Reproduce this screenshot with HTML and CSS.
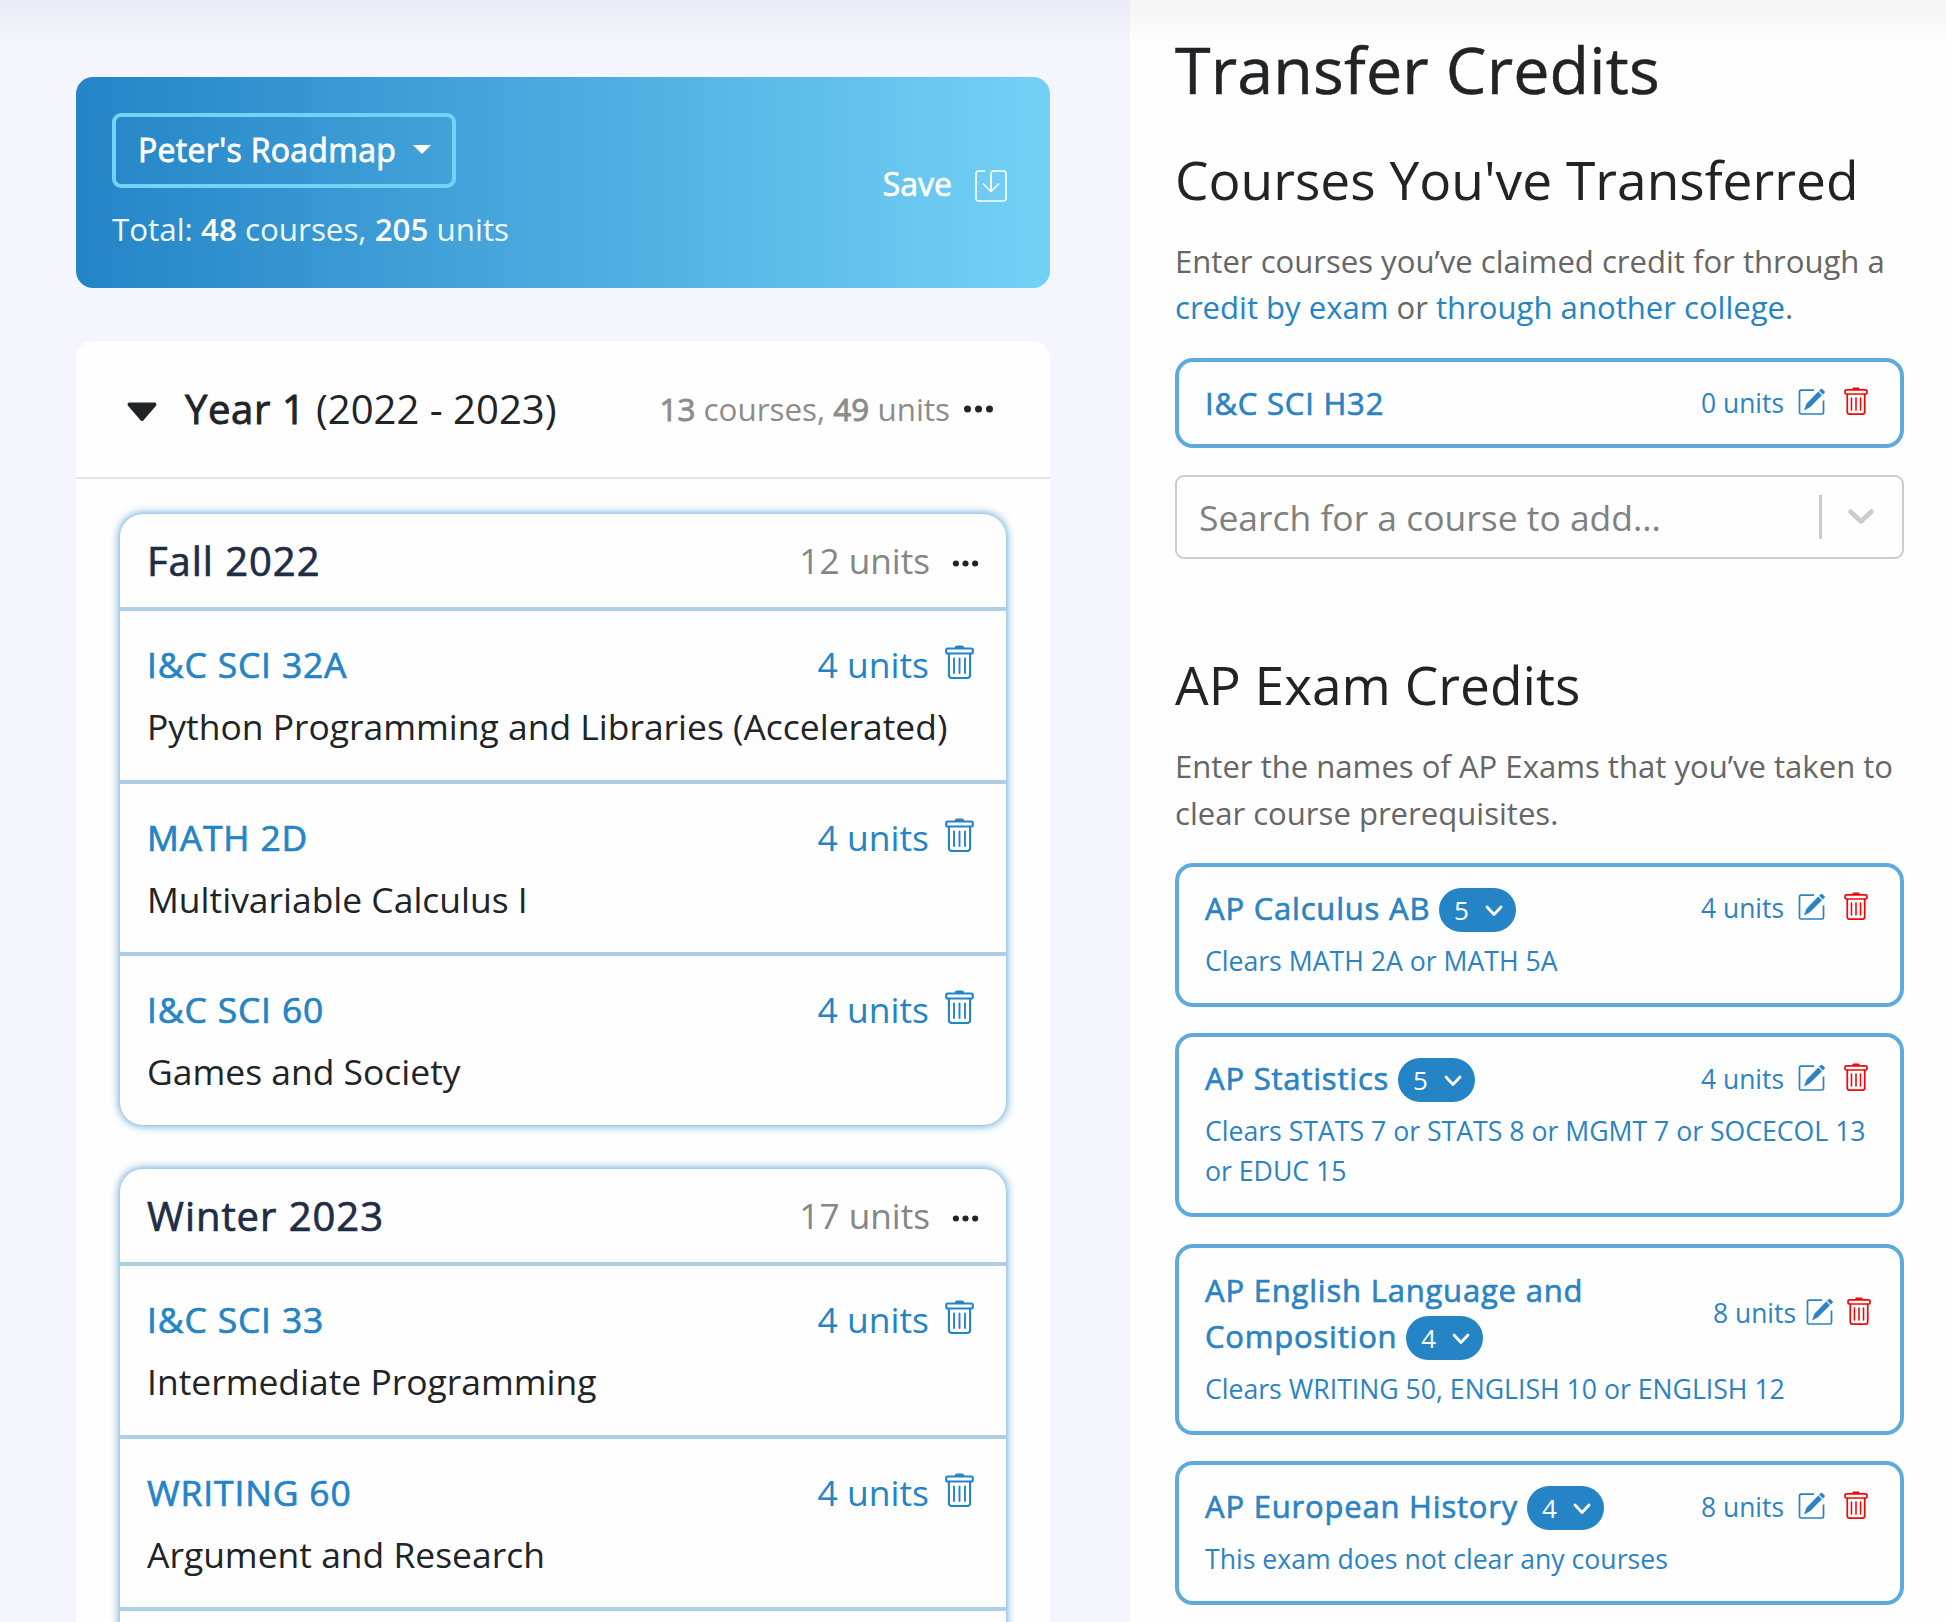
FILE: index.html
```
<!DOCTYPE html>
<html lang="en">
<head>
<meta charset="utf-8">
<title>Peter's Roadmap</title>
<link rel="stylesheet" href="styles.css">
</head>
<body>
<svg class="sprite" width="0" height="0">
  <symbol id="trash" viewBox="0 0 29 34">
    <path d="M9.600 3.400C9.800 1.200 11 .6 12 .6h5c1 0 2.200.6 2.400 2.800z" fill="currentColor"/>
    <g fill="none" stroke="currentColor" stroke-width="2.100" stroke-linecap="round">
      <rect x="1.200" y="3.500" width="26.600" height="5" rx="1.500"/>
      <path d="M3.900 8.800V30a3 3 0 0 0 3 3h15.200a3 3 0 0 0 3-3V8.800"/>
      <path d="M9 13.500v14.500M14.500 13.500v14.500M20 13.500v14.500" stroke-width="1.900"/>
    </g>
  </symbol>
  <symbol id="edit" viewBox="0 0 28 28">
    <path d="M16 2.200H3a1.500 1.500 0 0 0-1.500 1.500V24.500A1.500 1.500 0 0 0 3 26H24a1.500 1.500 0 0 0 1.500-1.500V12.500" fill="none" stroke="currentColor" stroke-width="1.700"/>
    <path d="M20.200 3.800l3.500 3.500L11.600 19.300 6.400 22l2.300-6.300zM21.300 2.700l1.400-1.300a1.200 1.200 0 0 1 1.700 0l1.800 1.800a1.200 1.200 0 0 1 0 1.700l-1.400 1.300z" fill="currentColor" stroke="currentColor" stroke-width=".5"/>
  </symbol>
  <symbol id="dots" viewBox="0 0 30 8">
    <circle cx="4" cy="4" r="3.500" fill="currentColor"/><circle cx="15" cy="4" r="3.500" fill="currentColor"/><circle cx="26" cy="4" r="3.500" fill="currentColor"/>
  </symbol>
  <symbol id="chev" viewBox="0 0 18 12">
    <path d="M2 2l7 7.500L16 2" fill="none" stroke="currentColor" stroke-width="2.800" stroke-linecap="round" stroke-linejoin="round"/>
  </symbol>
</svg>
<div class="app">
  <main class="planner">
    <header class="roadmap">
      <div>
        <button class="picker">Peter's Roadmap<span class="caret"></span></button>
        <div class="total">Total: <b>48</b> courses, <b>205</b> units</div>
      </div>
      <button class="save">Save
        <svg width="32" height="32" viewBox="0 0 32 32" fill="none" stroke="currentColor" stroke-width="1.700" stroke-linecap="round" stroke-linejoin="round"><path d="M9.500 1H3.500A2.500 2.500 0 0 0 1 3.500v25A2.500 2.500 0 0 0 3.500 31h25a2.500 2.500 0 0 0 2.500-2.500v-25A2.500 2.500 0 0 0 28.500 1h-10A2.500 2.500 0 0 0 16 3.500V21M8.500 14l7.500 7.500 7.500-7.500"/></svg>
      </button>
    </header>
    <section class="year">
      <div class="year-head">
        <svg class="fold" width="30" height="20" viewBox="0 0 30 20"><path d="M2.500 0.500h25a2 2 0 0 1 1.500 3.300L16.500 18.200a2 2 0 0 1-3 0L1 3.800A2 2 0 0 1 2.500.5z" fill="currentColor"/></svg>
        <h2 class="year-title"><b>Year 1</b> (2022 - 2023)</h2>
        <span class="year-stats"><b>13</b> courses, <b>49</b> units</span>
        <svg class="year-dots"><use href="#dots"/></svg>
      </div>
      <div class="quarters">
        <section class="quarter">
          <div class="q-head"><h3>Fall 2022</h3><span class="q-units">12 units</span><svg class="q-dots"><use href="#dots"/></svg></div>
          <div class="course"><div class="c-top"><span class="code">I&amp;C SCI 32A</span><span>4 units</span><svg class="trash"><use href="#trash"/></svg></div><div class="c-name">Python Programming and Libraries (Accelerated)</div></div>
          <div class="course"><div class="c-top"><span class="code">MATH 2D</span><span>4 units</span><svg class="trash"><use href="#trash"/></svg></div><div class="c-name">Multivariable Calculus I</div></div>
          <div class="course"><div class="c-top"><span class="code">I&amp;C SCI 60</span><span>4 units</span><svg class="trash"><use href="#trash"/></svg></div><div class="c-name">Games and Society</div></div>
        </section>
        <section class="quarter">
          <div class="q-head"><h3>Winter 2023</h3><span class="q-units">17 units</span><svg class="q-dots"><use href="#dots"/></svg></div>
          <div class="course"><div class="c-top"><span class="code">I&amp;C SCI 33</span><span>4 units</span><svg class="trash"><use href="#trash"/></svg></div><div class="c-name">Intermediate Programming</div></div>
          <div class="course"><div class="c-top"><span class="code">WRITING 60</span><span>4 units</span><svg class="trash"><use href="#trash"/></svg></div><div class="c-name">Argument and Research</div></div>
          <div class="course"></div>
        </section>
      </div>
    </section>
  </main>
  <aside class="transfer">
    <h1>Transfer Credits</h1>
    <h2 class="sec">Courses You've Transferred</h2>
    <p>Enter courses you’ve claimed credit for through a<br><a>credit by exam</a> or <a>through another college</a>.</p>
    <div class="card single">
      <div class="card-row"><div class="name">I&amp;C SCI H32</div><span class="units">0 units</span><svg class="edit"><use href="#edit"/></svg><svg class="del"><use href="#trash"/></svg></div>
    </div>
    <div class="search"><span class="placeholder">Search for a course to add...</span><span class="sep"></span><svg width="28" height="18" viewBox="0 0 28 18"><path d="M3.500 3.500L14 13.500 24.500 3.500" fill="none" stroke="currentColor" stroke-width="4.600" stroke-linecap="round" stroke-linejoin="round"/></svg></div>
    <h2 class="sec ap">AP Exam Credits</h2>
    <p>Enter the names of AP Exams that you’ve taken to<br>clear course prerequisites.</p>
    <div class="card">
      <div class="card-row"><div class="name">AP Calculus AB <span class="pill">5<svg><use href="#chev"/></svg></span></div><span class="units">4 units</span><svg class="edit"><use href="#edit"/></svg><svg class="del"><use href="#trash"/></svg></div>
      <div class="clears">Clears MATH 2A or MATH 5A</div>
    </div>
    <div class="card">
      <div class="card-row"><div class="name">AP Statistics <span class="pill">5<svg><use href="#chev"/></svg></span></div><span class="units">4 units</span><svg class="edit"><use href="#edit"/></svg><svg class="del"><use href="#trash"/></svg></div>
      <div class="clears">Clears STATS 7 or STATS 8 or MGMT 7 or SOCECOL 13<br>or EDUC 15</div>
    </div>
    <div class="card tall">
      <div class="card-row"><div class="name">AP English Language and<br>Composition <span class="pill">4<svg><use href="#chev"/></svg></span></div><span class="units">8 units</span><svg class="edit"><use href="#edit"/></svg><svg class="del"><use href="#trash"/></svg></div>
      <div class="clears">Clears WRITING 50, ENGLISH 10 or ENGLISH 12</div>
    </div>
    <div class="card">
      <div class="card-row"><div class="name">AP European History <span class="pill">4<svg><use href="#chev"/></svg></span></div><span class="units">8 units</span><svg class="edit"><use href="#edit"/></svg><svg class="del"><use href="#trash"/></svg></div>
      <div class="clears">This exam does not clear any courses</div>
    </div>
  </aside>
  <div class="top-shade"></div>
</div>
</body>
</html>
```
FILE: styles.css
```
* { box-sizing: border-box; }
body { margin: 0; font-family: "Open Sans", "Noto Sans", sans-serif; color: #212427; background: #fefefe; overflow: hidden; }
h1, h2, h3, p { margin: 0; font-weight: 400; }
button { font: inherit; color: inherit; background: none; border: 0; padding: 0; }
svg { display: block; flex: none; }
.sprite { position: absolute; }
.app { display: grid; grid-template-columns: 1130px 1fr; height: 1622px; overflow: hidden; position: relative; }
.top-shade { position: absolute; left: 0; right: 0; top: 0; height: 44px; background: linear-gradient(rgba(30, 30, 60, .045), rgba(30, 30, 60, 0)); }

.planner { background: #f4f5fd; padding: 77px 80px 0 76px; overflow: hidden; }
.roadmap { height: 211px; border-radius: 17px; padding: 36px 43px 0 36px; background: linear-gradient(90deg, #2484c6, #74d1f6); color: #fff; display: flex; justify-content: space-between; font-size: 32px; }
.picker { display: flex; align-items: center; width: 344px; height: 75px; border: 4px solid #74d1f8; border-radius: 9px; padding: 0 0 2px 22px; letter-spacing: .3px; -webkit-text-stroke: .8px currentColor; }
.caret { margin-left: 17px; border: 9px solid transparent; border-top-color: #fff; border-bottom: 0; }
.total { margin-top: 17px; line-height: 48px; font-size: 31.350px; color: #eefaff; }
.total b { font-weight: 600; color: #fff; }
.save { display: flex; align-items: center; gap: 23px; height: 75px; margin-top: 33px; line-height: 48px; -webkit-text-stroke: .7px currentColor; }
.save svg { margin-top: 5px; -webkit-text-stroke: 0; }

.year { margin-top: 53px; background: #fefefe; border-radius: 17px 17px 0 0; height: 1400px; }
.year-head { height: 138px; border-bottom: 2px solid #e4e4e4; display: flex; align-items: center; padding: 0 56px 2px 51px; }
.fold { margin: 8px 28px 0 0; }
.year-title { flex: 1; font-size: 40.100px; }
.year-title b { font-weight: 400; letter-spacing: .6px; -webkit-text-stroke: .9px currentColor; }
.year-stats { font-size: 31.400px; color: #8c8c8c; }
.year-stats b { font-weight: 400; -webkit-text-stroke: .9px currentColor; }
.year-dots { width: 31px; height: 8px; margin: 2px 0 0 13px; color: #212427; }
.quarters { padding: 35px 44px 0; display: flex; flex-direction: column; gap: 44px; }
.quarter { background: #fefefe; border-radius: 23px; box-shadow: 0 0 8px 1px rgba(36, 132, 198, .72); overflow: hidden; }
.q-head { display: flex; align-items: center; height: 93px; padding: 0 27px 0 27px; }
.q-head h3 { flex: 1; font-size: 40px; letter-spacing: .95px; color: #1f2d47; -webkit-text-stroke: .7px currentColor; }
.q-units { font-size: 35.200px; color: #868686; margin-top: -1px; }
.q-dots { width: 27px; height: 7px; margin: 6px 0 0 22px; color: #212427; }
.course { height: 172.700px; border-top: 4px solid #add0e8; padding: 27px 32px 0 27px; font-size: 35.450px; line-height: 53px; }
.c-top { display: flex; color: #2484c6; }
.code { flex: 1; letter-spacing: .85px; -webkit-text-stroke: .7px currentColor; }
.trash { width: 29px; height: 34px; margin: 7px 0 0 16px; }
.c-name { margin-top: 9px; }

.transfer { padding: 32px 42px 0 45px; background: #fefefe; }
h1 { font-size: 64.600px; line-height: 75px; letter-spacing: .15px; white-space: nowrap; -webkit-text-stroke: .5px currentColor; }
.sec { font-size: 53.250px; line-height: 64px; margin-top: 40.500px; }
.sec.ap { margin-top: 94.500px; }
p { font-size: 31.080px; line-height: 46.800px; color: #666; margin: 26px 0 27px; white-space: nowrap; }
.sec.ap + p { margin-bottom: 26px; }
p a { color: #2484c6; }
.card { border: 4px solid #5faadd; border-radius: 18px; padding: 18px 0 22px 26px; margin-bottom: 26.500px; color: #2b83c3; }
.card-row { display: flex; align-items: center; padding-right: 32px; }
.name { flex: 1; font-size: 31px; line-height: 46px; letter-spacing: .8px; white-space: nowrap; -webkit-text-stroke: .65px currentColor; }
.single { height: 90px; padding-top: 18px; }
.units { font-size: 26.400px; line-height: 40px; white-space: nowrap; }
.edit { width: 28px; height: 28px; margin: 0 0 2px 14px; }
.del { width: 24px; height: 28px; margin: 0 0 4px 18px; color: #ee0808; }
.pill { display: inline-flex; align-items: center; justify-content: space-between; width: 77px; height: 44px; border-radius: 22px; background: #2484c6; color: #fff; vertical-align: baseline; font-size: 26px; line-height: 44px; letter-spacing: 0; padding: 0 13px 0 15px; -webkit-text-stroke: 0; }
.pill svg { width: 18px; height: 12px; margin-top: 2px; }
.clears { margin-top: 9px; font-size: 26.640px; line-height: 40px; white-space: nowrap; }
.tall { padding-top: 19px; }
.tall .card-row { padding-right: 29px; }
.tall .edit { margin-left: 10px; }
.tall .del { margin-left: 13px; }
.search { display: flex; align-items: center; height: 84px; border: 2px solid #ccc; border-radius: 9px; padding: 0 27px 0 22px; color: #ccc; }
.placeholder { flex: 1; font-size: 35.450px; color: #808080; white-space: nowrap; }
.sep { width: 3px; height: 44px; background: #ccc; margin-right: 25px; }
```
